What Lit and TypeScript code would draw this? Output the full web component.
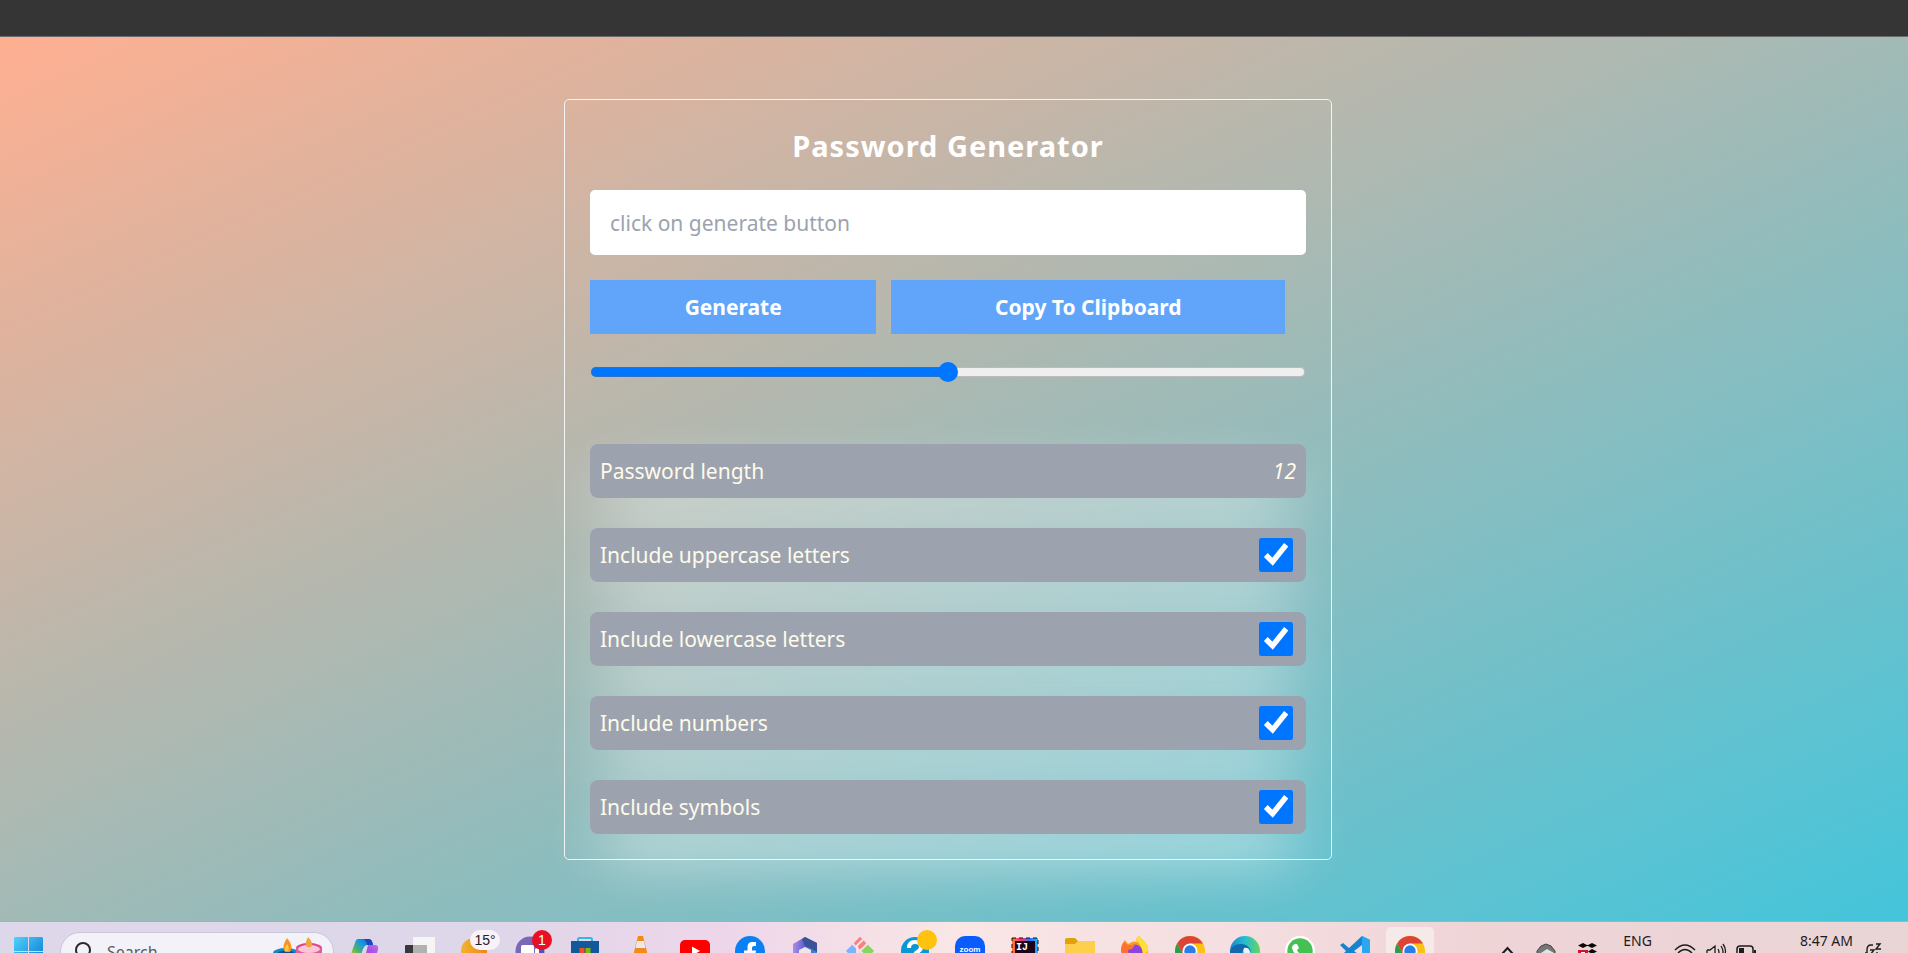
import { LitElement, html, svg, css } from "lit";
import { customElement, state } from "lit/decorators.js";
import { live } from "lit/directives/live.js";
import { styleMap } from "lit/directives/style-map.js";

const OPTIONS = [
  { id: "upper", label: "Include uppercase letters", chars: "ABCDEFGHIJKLMNOPQRSTUVWXYZ" },
  { id: "lower", label: "Include lowercase letters", chars: "abcdefghijklmnopqrstuvwxyz" },
  { id: "numbers", label: "Include numbers", chars: "0123456789" },
  { id: "symbols", label: "Include symbols", chars: "!@#$%^&*()_+-=[]{}<>?" },
];

const MIN = 4;
const MAX = 20;

@customElement("password-card")
class PasswordCard extends LitElement {
  @state() private password = "";
  @state() private size = 12;
  @state() private enabled: Record<string, boolean> = { upper: true, lower: true, numbers: true, symbols: true };

  static styles = css`
    :host { display: block; }
    * { box-sizing: border-box; }
    .card {
      border: 1px solid #f3f4f6;
      border-radius: 5px;
      padding: 25px;
      display: flex;
      flex-direction: column;
      color: #fffbeb;
      font-size: 21px;
      line-height: 34px;
    }
    .title {
      margin: 0 0 23px;
      font-size: 29px;
      line-height: 42px;
      font-weight: 700;
      letter-spacing: 1px;
      text-align: center;
      color: #fff;
    }
    .result {
      width: 100%;
      height: 65px;
      padding: 0 20px;
      border: 0;
      border-radius: 5px;
      background: #fff;
      color: #374151;
      font: inherit;
      outline: none;
    }
    .result::placeholder { color: #9ca3af; opacity: 1; }
    .actions { display: flex; gap: 15px; margin-top: 25px; }
    .action {
      padding: 10px;
      border: 0;
      background: #60a5fa;
      color: #fff;
      font: inherit;
      font-weight: 700;
      cursor: pointer;
    }
    .generate { width: 40%; }
    .copy { width: 55%; }
    .slider {
      height: 20px;
      margin: 28px 1px 62px;
      appearance: none;
      background: none;
    }
    .slider::-webkit-slider-runnable-track {
      height: 10px;
      border-radius: 5px;
      background: linear-gradient(90deg, #0075ff var(--fill), #efefef var(--fill));
      box-shadow: inset 0 0 0 1px rgba(110, 110, 110, 0.4);
    }
    .slider::-webkit-slider-thumb {
      appearance: none;
      width: 20px;
      height: 20px;
      margin-top: -5px;
      border-radius: 50%;
      background: #0075ff;
    }
    .rows { display: flex; flex-direction: column; gap: 30px; }
    .row {
      display: flex;
      align-items: center;
      justify-content: space-between;
      padding: 10px;
      border-radius: 8px;
      background: #9ca3af;
      box-shadow: 0 31px 62px -15px #fff;
    }
    .row label { flex: 1; }
    .value { font-style: italic; }
    .check {
      width: 34px;
      height: 34px;
      margin: 0 3px;
      accent-color: #0075ff;
    }
  `;

  private generate() {
    const pool = OPTIONS.filter((o) => this.enabled[o.id]).map((o) => o.chars).join("");
    if (!pool) return;
    const picks = crypto.getRandomValues(new Uint32Array(this.size));
    this.password = Array.from(picks, (n) => pool[n % pool.length]).join("");
  }

  private copy() {
    navigator.clipboard?.writeText(this.password);
  }

  render() {
    const fill = `${((this.size - MIN) / (MAX - MIN)) * 100}%`;
    return html`
      <section class="card">
        <h1 class="title">Password Generator</h1>
        <input class="result" type="text" readonly aria-label="Generated password"
          placeholder="click on generate button" .value=${this.password} />
        <div class="actions">
          <button class="action generate" @click=${this.generate}>Generate</button>
          <button class="action copy" @click=${this.copy}>Copy To Clipboard</button>
        </div>
        <input class="slider" id="length" type="range" min=${MIN} max=${MAX} style=${styleMap({ "--fill": fill })}
          .value=${live(String(this.size))}
          @input=${(e: Event) => (this.size = Number((e.target as HTMLInputElement).value))} />
        <div class="rows">
          <div class="row">
            <label for="length">Password length</label>
            <output class="value" for="length">${this.size}</output>
          </div>
          ${OPTIONS.map((o) => html`
            <div class="row">
              <label for=${o.id}>${o.label}</label>
              <input class="check" id=${o.id} type="checkbox" .checked=${this.enabled[o.id]}
                @change=${(e: Event) =>
                  (this.enabled = { ...this.enabled, [o.id]: (e.target as HTMLInputElement).checked })} />
            </div>`)}
        </div>
      </section>`;
  }
}

const chrome = svg`
  <circle cx="15" cy="15" r="15" fill="#fbc116"/>
  <path d="M2 7.500A15 15 0 0 1 28 7.500H15L8.500 18.700Z" fill="#db4437"/>
  <path d="M2 7.500A15 15 0 0 0 13 29.800L20 19L15 15L8.500 18.700Z" fill="#2f9b4e"/>
  <circle cx="15" cy="15" r="7.500" fill="#fff"/><circle cx="15" cy="15" r="5.700" fill="#2b7de9"/>`;

// Taskbar entries in order; each glyph is drawn on a 30 x 30 grid.
const APPS = [
  { name: "Copilot", art: svg`
    <defs><linearGradient id="cp1" x1="0" y1="1" x2="1" y2="0"><stop offset="0" stop-color="#e8c42c"/><stop offset=".35" stop-color="#4bb36b"/><stop offset=".6" stop-color="#199bdd"/><stop offset="1" stop-color="#1b57c9"/></linearGradient>
    <linearGradient id="cp2" x1="0" y1="1" x2="1" y2="0"><stop offset="0" stop-color="#ee5d8c"/><stop offset=".6" stop-color="#a64fe0"/><stop offset="1" stop-color="#c66be9"/></linearGradient></defs>
    <path d="M8 3H19Q22 3 23 9H17Q14 9 12 16L10 22H3Q0 22 2 15L5 7Q6 3 8 3Z" fill="url(#cp1)"/>
    <path d="M15 3h4q3 0 4 6h-6q-1-5-3-5Z" fill="#1a47c4"/>
    <path d="M18 9H25Q29 9 28 14L24 26Q23 29 19 29H10Q14 27 15 21Z" fill="url(#cp2)"/>` },
  { name: "Task View", art: svg`
    <rect x="8" y="1" width="22" height="22" rx="1" fill="#f5f5f5"/><rect y="9" width="22" height="20" rx="1" fill="#383838"/><rect x="8" y="9" width="14" height="14" fill="#b3b0b4"/>` },
  { name: "Weather", art: svg`
    <defs><linearGradient id="wt"><stop offset="0" stop-color="#efb52e"/><stop offset="1" stop-color="#ef8420"/></linearGradient></defs>
    <circle cx="14" cy="15" r="13" fill="url(#wt)"/>`, badge: "15°", tone: "pale" },
  { name: "Chat", art: svg`
    <circle cx="15" cy="15" r="14.500" fill="#7a67b6"/><path d="M21 10h8v12h-8Z" fill="#5a4dc0"/><rect x="6" y="9" width="13" height="13" rx="1.500" fill="#fff"/><path d="M20 13l4-2v10l-4-2Z" fill="#fff"/>`, badge: "1", tone: "red" },
  { name: "Microsoft Store", art: svg`
    <path d="M8 6V3.500Q8 2 9.500 2h11Q22 2 22 3.500V6" fill="none" stroke="#30b8ee" stroke-width="2"/><path d="M1 5h28v22q0 2-2 2H3q-2 0-2-2Z" fill="#12589a"/><path d="M9.500 12h5v5h-5Z" fill="#f25022"/><path d="M15.500 12h5v5h-5Z" fill="#7fba00"/><path d="M9.500 18h5v5h-5Z" fill="#00a4ef"/><path d="M15.500 18h5v5h-5Z" fill="#ffb900"/>` },
  { name: "VLC", art: svg`
    <path d="M13 0h5L24 24H7Z" fill="#f28a1c"/><path d="M12 5h7L20.500 12h-10Z" fill="#e9e9e9"/><path d="M8.500 17h14L24 22h-17Z" fill="#e2e2e2"/><path d="M4 24h22l2 5H2Z" fill="#e97d10"/>` },
  { name: "YouTube", art: svg`
    <rect y="4" width="30" height="22" rx="5" fill="#f00"/><path d="M12 10.500l8 4.500-8 4.500Z" fill="#fff"/>` },
  { name: "Facebook", art: svg`
    <circle cx="15" cy="15" r="15" fill="#0a80f5"/><path d="M12.500 30V19H9v-4.500h3.500V11q0-5 5-5H21v4h-2q-2 0-2 2v2.500h4L20.300 19H17v11Z" fill="#fff"/>` },
  { name: "Microsoft 365", art: svg`
    <defs><linearGradient id="m3"><stop offset="0" stop-color="#b18be6"/><stop offset=".5" stop-color="#5461c9"/><stop offset="1" stop-color="#2d8fe6"/></linearGradient></defs>
    <path d="M15 1L27 7v15L16 29 3 22V8Z" fill="url(#m3)"/><path d="M15 1L27 7v9l-7-4-5-2-3-7Z" fill="#3a5296"/><path d="M15 11l6 3v6l-6 3-6-3v-6Z" fill="#f5e3ec"/>` },
  { name: "Git", art: svg`
    <g transform="rotate(45 15 15)"><path d="M5 5h9v9H5Z" fill="#fb8080"/><path d="M16 5h9v9h-9Z" fill="#89d55f"/><path d="M5 16h9v9H5Z" fill="#80b3ff"/><path d="M16 16h9v9h-9Z" fill="#f5c36a"/><path d="M9 5v8l9 9" fill="none" stroke="#fbe8e5" stroke-width="2"/></g>` },
  { name: "Help", art: svg`
    <circle cx="15" cy="15" r="14" fill="#0b97d5"/><path d="M9 12q0-6 6-6t6 5q0 3-3 4.500t-3 4" fill="none" stroke="#fff" stroke-width="4"/><circle cx="15" cy="24" r="2.300" fill="#fff"/>`, badge: " ", tone: "yellow" },
  { name: "Zoom", art: svg`
    <rect width="30" height="30" rx="10" fill="#0b5cff"/><text x="15" y="16" text-anchor="middle" font-size="8" font-weight="600" fill="#fff">zoom</text>` },
  { name: "IntelliJ IDEA", art: svg`
    <defs><linearGradient id="ij"><stop offset="0" stop-color="#ff7a2e"/><stop offset=".35" stop-color="#fe2f6d"/><stop offset=".7" stop-color="#2575ff"/><stop offset="1" stop-color="#21b7ff"/></linearGradient></defs>
    <rect x="2" y="2" width="26" height="28" fill="url(#ij)" stroke="#111" stroke-dasharray="4 3"/><rect x="5" y="5" width="20" height="20" fill="#1b0318"/><text x="6" y="14" font-family="Liberation Mono" font-size="10" font-weight="700" fill="#fff">IJ</text>` },
  { name: "File Explorer", art: svg`
    <path d="M0 4q0-2 2-2h8l3 3h15q2 0 2 2v6H0Z" fill="#dfa10c"/><path d="M0 8h10l3-3h15q2 0 2 2v20q0 2-2 2H2q-2 0-2-2Z" fill="#fdcf4c"/>` },
  { name: "Firefox", art: svg`
    <path d="M15 29A14 14 0 0 1 1 15Q1 9 5 4l3 4 4-2q2-1 5 0-2-4 2-6 2 3 5 5 5 5 4 11A14 14 0 0 1 15 29Z" fill="#ff9a1f"/><path d="M17 5q-2-3 2-5 2 4 5 5 5 5 4 10l-5 5q0-8-6-15Z" fill="#ffdf3a"/><circle cx="15" cy="16" r="7.500" fill="#8b45dc"/><path d="M1 15Q1 9 4 6l4 3h7l-3 4-4 1q0 5 6 8Q4 25 1 15Z" fill="#ff7130"/>` },
  { name: "Chrome", art: chrome },
  { name: "Edge", art: svg`
    <defs><linearGradient id="ed"><stop offset="0" stop-color="#1687cc"/><stop offset=".5" stop-color="#27bdd3"/><stop offset="1" stop-color="#68d65b"/></linearGradient></defs>
    <circle cx="15" cy="15" r="15" fill="url(#ed)"/><path d="M0 15Q2 8 11 8q8 0 10 8-5-5-8-2-3 8 8 15Q1 31 0 15Z" fill="#1269ad"/><path d="M14 12q5-1 6 4 0 3-3 4-5-3-3-8Z" fill="#e7f6fb"/>` },
  { name: "WhatsApp", art: svg`
    <circle cx="15" cy="15" r="15" fill="#fff"/><circle cx="15" cy="15" r="12.700" fill="#45c154"/><path d="M10 8q2-1 3 2l1 2-2 2q2 4 5 5l2-2 4 2q0 4-4 4-9-1-12-11 0-3 3-4Z" fill="#fff"/>` },
  { name: "Visual Studio Code", art: svg`
    <path d="M22 0l8 4v22l-8 4L9 18l-6 5-3-2 6-6-6-6 3-2 6 5Z" fill="#1683cf"/><path d="M22 0l8 4v22l-8 4Z" fill="#2aa7f0"/><path d="M22 9v12l-8-6Z" fill="#f3dcdf"/>` },
  { name: "Chrome window", art: chrome, active: true },
];

@customElement("task-bar")
class TaskBar extends LitElement {
  static styles = css`
    :host {
      box-sizing: border-box;
      display: block;
      height: 32px;
      overflow: hidden;
      border-top: 1px solid #b5a9b9;
      background: linear-gradient(90deg, #ddd8e9 0%, #ded6e9 25%, #eed6ea 38%, #f9e6e5 50%, #f5dfe1 64%, #efd4d6 78%, #e9d5d6 100%);
      color: #1c1c1c;
      font-size: 14px;
      line-height: 20px;
    }
    * { box-sizing: border-box; }
    .bar { display: flex; align-items: flex-start; padding: 0 26px 0 14px; }
    .start, .app { border: 0; padding: 0; background: none; }
    .start { width: 29px; height: 29px; margin-top: 15px; }
    svg { display: block; overflow: visible; }
    .search {
      display: flex;
      align-items: center;
      width: 274px;
      height: 40px;
      margin: 10px 7px 0 17px;
      padding: 0 11px 0 14px;
      border: 1px solid #cbc5d9;
      border-radius: 20px;
      background: #f4f2f9;
    }
    .query {
      flex: 1;
      min-width: 0;
      margin-left: 14px;
      padding: 0;
      border: 0;
      background: none;
      font: inherit;
      font-size: 16px;
      outline: none;
    }
    .query::placeholder { color: #5c5a60; opacity: 1; }
    .apps { display: flex; gap: 7px; }
    .app {
      position: relative;
      width: 48px;
      height: 48px;
      margin-top: 5px;
      padding: 9px;
      border-radius: 5px;
    }
    .active { background: #f6eae9; }
    .badge {
      position: absolute;
      top: 3px;
      left: 26px;
      min-width: 20px;
      height: 20px;
      border-radius: 10px;
      font-size: 14px;
      line-height: 20px;
      text-align: center;
    }
    .pale { left: 19px; width: 30px; background: #f7f3f8; color: #222; }
    .red { background: #e81123; color: #fff; }
    .yellow { background: #ffc20e; }
    .tray { display: flex; align-items: flex-start; margin-left: auto; }
    .tray svg { margin-top: 21px; }
    .lang { margin: 9px 22px 0 25px; }
    .clock { margin: 9px 12px 0 43px; }
    .gap { margin-left: 22px; }
    .near { margin-left: 10px; }
  `;

  render() {
    return html`
      <nav class="bar" aria-label="Taskbar">
        <button class="start" aria-label="Start">
          <svg width="29" height="29" viewBox="0 0 29 29">
            <defs><linearGradient id="win" x2="1" y2="1"><stop offset="0" stop-color="#4fd2fb"/><stop offset="1" stop-color="#0573d0"/></linearGradient></defs>
            <path d="M1 0H14V14H0V1ZM15 0H28L29 1V14H15ZM0 15H14V29H0ZM15 15H29V29H15Z" fill="url(#win)"/>
          </svg>
        </button>
        <div class="search">
          <svg width="18" height="20" viewBox="0 0 18 20" fill="none" stroke="#2b2b2e" stroke-width="2"><circle cx="8" cy="8" r="7"/><path d="M13 13l5 5.500"/></svg>
          <input class="query" type="text" placeholder="Search" aria-label="Search" />
          <svg width="50" height="30" viewBox="0 0 50 30">
            <ellipse cx="14" cy="16" rx="13" ry="5" fill="#1688c9"/><path d="M1 16v14h26V16Z" fill="#1b6fae"/><ellipse cx="14" cy="16" rx="8" ry="2.500" fill="#0d4f86"/>
            <ellipse cx="37" cy="11" rx="13" ry="5" fill="#e0478b"/><path d="M24 11v16h26V11Z" fill="#dd5f9b"/><ellipse cx="37" cy="12" rx="11" ry="4" fill="#f9c6d8"/>
            <path d="M15 1q7 8 3 14h-5q-4-5 2-14Z" fill="#f9941e"/><path d="M15 7q3 4 1 7h-3q-1-3 2-7Z" fill="#ffc746"/><path d="M36 0q6 6 3 10h-4q-3-3 1-10Z" fill="#f0a63c"/>
          </svg>
        </div>
        <div class="apps">
          ${APPS.map((a) => html`
            <button class="app ${a.active ? "active" : ""}" aria-label=${a.name}>
              <svg width="30" height="30" viewBox="0 0 30 30">${a.art}</svg>
              ${a.badge ? html`<span class="badge ${a.tone}">${a.badge}</span>` : ""}
            </button>`)}
        </div>
        <div class="tray">
          <svg width="13" height="14" viewBox="0 0 13 14" fill="none" stroke="#1c1c1c" stroke-width="2"><path d="M1 11l5.500-6 5.500 6"/></svg>
          <svg class="gap" width="20" height="14" viewBox="0 0 20 14"><path d="M1 8l4-5 5-2 5 2 4 5v6H1Z" fill="#777" stroke="#444"/><path d="M5 10l6-4 7 4v4H5Z" fill="#e4e4e4"/></svg>
          <svg class="gap" width="20" height="14" viewBox="0 0 20 14"><path d="M5 0l5 2.500L5 5 0 2.500ZM14 0l5 2.500L14 5 9 2.500ZM14 6l5 2.500-5 2.500-4-2.500Z" fill="#0a0a0a"/><rect y="7" width="10" height="7" fill="#d4112a"/><path d="M3 9h4v5H3Z" fill="#fff"/></svg>
          <span class="lang">ENG</span>
          <svg width="22" height="16" viewBox="0 0 22 16" fill="none" stroke="#1c1c1c" stroke-width="1.500"><path d="M1 7q10-10 20 0M4 10q7-7 14 0M7 13q4-4 8 0"/></svg>
          <svg class="near" width="20" height="16" viewBox="0 0 20 16" fill="none" stroke="#1c1c1c" stroke-width="1.300"><path d="M1 7h3l5-4v14M1 7v6M12 6q2 3 0 7M15 3q4 6 0 11M17 1q5 7 0 14"/></svg>
          <svg class="near" width="21" height="16" viewBox="0 0 21 16"><rect x="1" y="3" width="16" height="13" rx="3" fill="none" stroke="#1c1c1c" stroke-width="1.500"/><path d="M3 5h5v9H3ZM18 7h2v6h-2Z" fill="#1c1c1c"/></svg>
          <span class="clock">8:47 AM</span>
          <svg width="17" height="16" viewBox="0 0 17 16" fill="none" stroke="#1c1c1c" stroke-width="1.400"><path d="M8 2H6Q2 2 2 7v3H0M11 1h4l-4 5h5M5 7h4l-4 5h4M12 9v6"/></svg>
        </div>
      </nav>`;
  }
}

@customElement("app-root")
class AppRoot extends LitElement {
  static styles = css`
    :host {
      display: flex;
      flex-direction: column;
      min-height: 100vh;
      font-family: "Segoe UI", "Noto Sans", "Open Sans", sans-serif;
    }
    .top { height: 37px; box-sizing: border-box; background: #353535; border-bottom: 1px solid #6a6a6a; }
    .page {
      flex: 1;
      display: flex;
      justify-content: center;
      align-items: flex-start;
      padding: 62px 12px 0 0;
      background: linear-gradient(to bottom right, #ffaf91, #44c5db);
    }
    .card { width: 100%; max-width: 768px; }
  `;

  render() {
    return html`
      <header class="top"></header>
      <main class="page"><password-card class="card"></password-card></main>
      <task-bar></task-bar>`;
  }
}
